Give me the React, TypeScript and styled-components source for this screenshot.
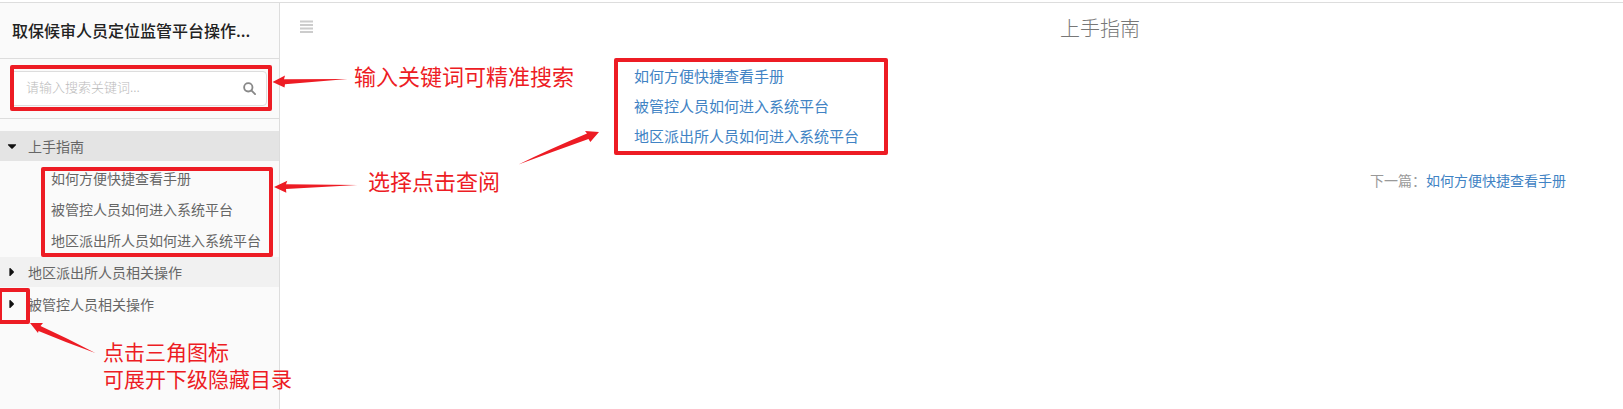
import React from 'react';
import styled, { createGlobalStyle } from 'styled-components';
import { FaCaretDown, FaCaretRight } from 'react-icons/fa';

const GlobalStyle = createGlobalStyle`
  *, *::before, *::after { box-sizing: border-box; }
  body {
    margin: 0;
    background: #fff;
    font-family: "Noto Sans CJK SC", "Microsoft YaHei", sans-serif;
    font-size: 14px;
    color: #666;
  }
  a { text-decoration: none; color: inherit; }
  ul { list-style: none; margin: 0; padding: 0; }
`;

const Page = styled.div`
  position: relative;
  display: flex;
  min-height: 100vh;
  border-top: 2px solid #fff;
  overflow: hidden;
`;

const Sidebar = styled.aside`
  flex: 0 0 280px;
  background: #fafafa;
  border-top: 1px solid #ddd;
  border-right: 1px solid #ddd;
`;

const BookTitle = styled.h1`
  margin: 0;
  padding: 0 24px 0 12px;
  font-size: 16px;
  font-weight: 500;
  line-height: 55px;
  color: #222;
  white-space: nowrap;
  border-bottom: 1px solid #ddd;
`;

const SearchArea = styled.form`
  padding: 12px;
  padding-left: 10px;
  border-bottom: 1px solid #ddd;
`;

const SearchField = styled.div`
  display: flex;
  align-items: center;
  height: 35px;
  padding: 0 10px 0 15px;
  background: #fff;
  border: 1px solid #ddd;
  border-radius: 4px;
`;

const SearchInput = styled.input`
  flex: 1;
  min-width: 0;
  padding: 0 0 4px;
  border: 0;
  outline: 0;
  background: none;
  font: inherit;
  font-size: 13px;
  color: #555;
  &::placeholder { color: #bbb; opacity: 1; font-weight: 300; }
`;

const IconButton = styled.button`
  display: flex;
  padding: 0;
  border: 0;
  background: none;
  color: #888;
  cursor: pointer;
`;

const Tree = styled.ul`
  && {
    display: flex;
    flex-direction: column;
    gap: 2px;
    padding-top: 12px;
  }
`;

const SubTree = styled.ul`
  && {
    display: flex;
    flex-direction: column;
    gap: 1px;
    margin-top: 2px;
  }
`;

const TreeRow = styled.div<{ $bg?: string }>`
  display: flex;
  align-items: center;
  height: 30px;
  padding-left: 5px;
  background: ${({ $bg }) => $bg ?? 'transparent'};
`;

const Toggle = styled(IconButton)`
  width: 23px;
  color: #111;
`;

const SubLink = styled.a`
  display: block;
  padding-left: 51px;
  line-height: 30px;
`;

const Main = styled.main`
  position: relative;
  flex: 1;
  padding: 0 57px 0 20px;
  border-top: 1px solid #ddd;
`;

const Header = styled.header`
  display: flex;
  align-items: center;
  height: 48px;
`;

const MenuButton = styled(IconButton)`
  width: 334px;
  color: #ccc;
`;

const PageTitle = styled.h2`
  flex: 1;
  margin: 0;
  text-align: center;
  font-size: 20px;
  font-weight: 300;
  color: #777;
`;

const Article = styled.article`
  padding: 10px 0 0 334px;
`;

const ChapterLink = styled.a`
  display: table;
  font-size: 15px;
  line-height: 30px;
  color: #4183c4;
`;

const NextLine = styled.p`
  margin: 14px 0 0;
  text-align: right;
  line-height: 30px;
  color: #999;
  a { color: #4183c4; }
`;

const Frame = styled.div<{ $x: number; $y: number; $w: number; $h: number }>`
  position: absolute;
  left: ${({ $x }) => $x}px;
  top: ${({ $y }) => $y}px;
  width: ${({ $w }) => $w}px;
  height: ${({ $h }) => $h}px;
  border: 4px solid #ed1c24;
  border-radius: 2px;
`;

const Note = styled.p<{ $x: number; $y: number; $small?: boolean }>`
  position: absolute;
  left: ${({ $x }) => $x}px;
  top: ${({ $y }) => $y}px;
  margin: 0;
  font-size: ${({ $small }) => ($small ? 21 : 22)}px;
  line-height: 27px;
  white-space: nowrap;
  color: #ed1c24;
`;

const Arrows = styled.svg`
  position: absolute;
  left: 0;
  top: 0;
  fill: #ed1c24;
`;

const Overlay = styled.div`
  position: absolute;
  top: -2px;
  left: 0;
  pointer-events: none;
`;

const chapters = ['如何方便快捷查看手册', '被管控人员如何进入系统平台', '地区派出所人员如何进入系统平台'];

export default function App() {
  return (
    <>
      <GlobalStyle />
      <Page>
        <Sidebar>
          <BookTitle>取保候审人员定位监管平台操作...</BookTitle>
          <SearchArea role="search" onSubmit={(e) => e.preventDefault()}>
            <SearchField>
              <SearchInput type="text" aria-label="搜索" placeholder="请输入搜索关键词..." />
              <IconButton type="submit" aria-label="搜索">
                <svg width="13" height="13" viewBox="0 0 14 14" fill="none" stroke="currentColor" strokeWidth="2">
                  <circle cx="5.7" cy="5.7" r="4.5" />
                  <path d="M9 9l4 4" strokeLinecap="round" />
                </svg>
              </IconButton>
            </SearchField>
          </SearchArea>
          <nav>
            <Tree>
              <li>
                <TreeRow $bg="#e4e4e4">
                  <Toggle type="button" aria-label="收起"><FaCaretDown size={14} /></Toggle>
                  <a href="#guide">上手指南</a>
                </TreeRow>
                <SubTree>
                  {chapters.map((c, i) => (
                    <li key={c}><SubLink href={`#chapter-${i + 1}`}>{c}</SubLink></li>
                  ))}
                </SubTree>
              </li>
              <li>
                <TreeRow $bg="#f1f1f1">
                  <Toggle type="button" aria-label="展开"><FaCaretRight size={14} /></Toggle>
                  <a href="#station">地区派出所人员相关操作</a>
                </TreeRow>
              </li>
              <li>
                <TreeRow>
                  <Toggle type="button" aria-label="展开"><FaCaretRight size={14} /></Toggle>
                  <a href="#person">被管控人员相关操作</a>
                </TreeRow>
              </li>
            </Tree>
          </nav>
        </Sidebar>
        <Main>
          <Header>
            <MenuButton type="button" aria-label="目录">
              <svg width="13" height="14" viewBox="0 0 13 14" fill="currentColor">
                <path d="M0 0.5h13v2H0zM0 4h13v2H0zM0 7.5h13v2H0zM0 11h13v2H0z" />
              </svg>
            </MenuButton>
            <PageTitle>上手指南</PageTitle>
          </Header>
          <Article>
            {chapters.map((c, i) => (
              <ChapterLink key={c} href={`#chapter-${i + 1}`}>{c}</ChapterLink>
            ))}
          </Article>
          <NextLine>下一篇：<a href="#chapter-1">如何方便快捷查看手册</a></NextLine>
        </Main>
        <Overlay>
          <Frame $x={10} $y={65} $w={262} $h={46} />
          <Frame $x={41} $y={167} $w={232} $h={90} />
          <Frame $x={-2} $y={288} $w={32} $h={36} />
          <Frame $x={614} $y={58} $w={274} $h={97} />
          <Arrows width="640" height="400" viewBox="0 0 640 400">
            <path d="M272.5 82L285 75.5L284 79.2L347.5 79L285 84.2L284.5 87.5Z" />
            <path d="M274 187L287.3 180.7L286 184.2L357.5 185L286 189L286.3 192.7Z" />
            <path d="M599 132L585 131L587 133.5Q550 149 518.5 164.4Q552 152 588.5 139L590.3 142Z" />
            <path d="M30 323L43 323L40.5 326Q68 338.5 95.3 353Q66 342.5 38.5 331L38 333Z" />
          </Arrows>
          <Note $x={354} $y={62}>输入关键词可精准搜索</Note>
          <Note $x={368} $y={167}>选择点击查阅</Note>
          <Note $x={103} $y={338} $small>点击三角图标<br />可展开下级隐藏目录</Note>
        </Overlay>
      </Page>
    </>
  );
}
